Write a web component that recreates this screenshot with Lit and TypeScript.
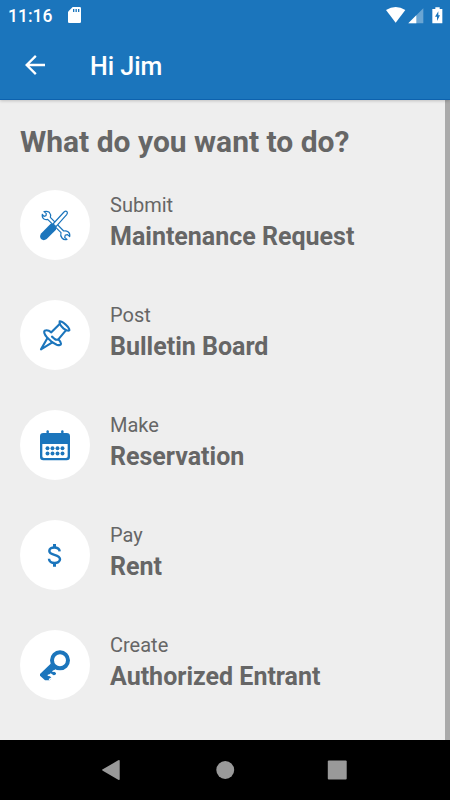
import { LitElement, html, svg, css, type TemplateResult } from "lit";
import { customElement, property } from "lit/decorators.js";

type IconName = "tools" | "pin" | "calendar" | "dollar" | "key";

const icons: Record<IconName, TemplateResult> = {
  tools: svg`
    <g fill="#fff" stroke="currentColor" stroke-width="3.6" stroke-linejoin="round">
      <path d="M102 95 L109 101 L108 107 L102 109 L97 103 Q95 112 102 117 Q108 120 113 118
        L153 158 Q150 167 156 174 Q162 181 171 178 L164 172 L166 165 L173 164 L179 170
        Q181 160 174 155 Q168 151 161 153 L121 112 Q124 104 118 97 Q111 92 102 95Z"/>
      <path d="M129 132 L162 96 Q167 92 171 95 Q174 99 170 104 L138 140Z"/>
    </g>
    <path fill="currentColor" d="M122 131 L127 132 L138 142 L138 149 L110 177 Q101 184 93 177 Q87 169 94 160Z"/>`,
  pin: svg`
    <g fill="none" stroke="currentColor" stroke-width="6.4" stroke-linejoin="round" stroke-linecap="round">
      <path d="M149 94 Q154 93 166 103 Q179 115 178 121 Q174 125 161 116 Q147 104 149 94Z"/>
      <path d="M149 102 L124 127 Q113 118 104 122 Q99 128 111 142 Q125 158 140 164 Q153 168 153 161 Q153 156 145 148 L167 122"/>
      <path d="M126 140 L134 147 Q140 151 145 148"/>
      <path d="M112 145 L93 178 L127 157"/>
    </g>`,
  calendar: svg`
    <g fill="currentColor">
      <rect x="109.500" y="91" width="7" height="14" rx="3"/>
      <rect x="153.500" y="91" width="7" height="14" rx="3"/>
      <path fill-rule="evenodd" d="M100 99 H170 Q180 99 180 109 V171 Q180 181 170 181 H100 Q90 181 90 171 V109 Q90 99 100 99Z
        M97 132 V169 Q97 174 102 174 H168 Q173 174 173 169 V132Z"/>
      ${[112.5, 127.5, 142.5, 157.5].map((x) =>
        [144.5, 160.5].map((y) => svg`<circle cx=${x} cy=${y} r="5.9"/>`))}
    </g>`,
  dollar: svg`
    <g fill="none" stroke="currentColor" stroke-width="7.5">
      <path d="M149 124 C147 108 118 109 118 123 C118 138 150 131 150 148 C150 163 117 163 117 146"/>
      <path stroke-width="9" d="M133.5 102 V113 M133.5 159 V170"/>
    </g>`,
  key: svg`
    <circle cx="150" cy="121" r="24" fill="none" stroke="currentColor" stroke-width="12"/>
    <path fill="currentColor" d="M122 131 L140 147 L131 151 L130 153 L138 159 Q139 165 131 166 L122 160
      L116 165 L125 173 Q124 180 114 181 L105 181 L90 167 V162Z"/>
    <path stroke="#fff" stroke-width="4.500" stroke-linecap="round" fill="none" d="M129 154 L137 151 M115 166 L126 167"/>
    <path stroke="#fff" stroke-width="4" d="M117 179 L128 172"/>`,
};

@customElement("menu-row")
class MenuRow extends LitElement {
  @property() icon: IconName = "tools";
  @property() action = "";
  @property() subject = "";

  static styles = css`
    :host { display: flex; align-items: center; gap: 20px; height: 70px; color: #666; }
    .disc {
      flex: none; width: 70px; height: 70px; border-radius: 50%;
      background: #fff; color: #1b75bc;
      display: flex; align-items: center; justify-content: center;
    }
    svg { display: block; width: 34px; height: 34px; }
    .action { font-size: 20px; line-height: 24px; }
    .subject { font-size: 25px; line-height: 30px; font-weight: 700; margin-top: 5px; white-space: nowrap; }
    .text { padding-bottom: 5px; }
  `;

  render() {
    return html`
      <div class="disc"><svg viewBox="84 84 102 102">${icons[this.icon]}</svg></div>
      <div class="text">
        <div class="action">${this.action}</div>
        <div class="subject">${this.subject}</div>
      </div>`;
  }
}

@customElement("app-root")
class AppRoot extends LitElement {
  static styles = css`
    :host {
      display: flex; flex-direction: column; height: 800px; width: 450px; overflow: hidden;
      font-family: Roboto, "Noto Sans", sans-serif; background: #eee; color: #666;
    }
    svg { display: block; }
    .top { background: #1b75bc; color: #fff; height: 99px; border-bottom: 1px solid #0d62ae; box-shadow: 0 1px 3px #0003; z-index: 1; }
    .status { display: flex; align-items: center; height: 30px; padding: 0 7.4px 0 8px; box-sizing: border-box; }
    .time { font-size: 17.5px; line-height: 30px; font-weight: 500; width: 60px; padding-top: 1px; }
    .spacer { flex: 1; }
    .bar { display: flex; align-items: center; height: 70px; padding-left: 25px; }
    .title { font-size: 25px; line-height: 30px; font-weight: 500; margin-left: 45px; padding-top: 4px; }
    .body { flex: 1; display: flex; min-height: 0; }
    .content { flex: 1; padding: 24px 20px 0; }
    .track { width: 5px; background: #aaa; }
    h1 { margin: 0 0 30px; font-size: 30px; line-height: 36px; font-weight: 700; white-space: nowrap; }
    .list { display: flex; flex-direction: column; gap: 40px; }
    .nav { height: 60px; background: #000; display: flex; align-items: center; justify-content: center; }
    .nav svg { width: 112.5px; height: 60px; fill: #999; }
  `;

  render() {
    return html`
      <div class="top">
        <div class="status">
          <div class="time">11:16</div>
          <svg width="13" height="16" viewBox="204 21 39 48">
            <path fill="#fff" d="M218 21 H239 Q243 21 243 25 V65 Q243 69 239 69 H208 Q204 69 204 65 V35Z"/>
            <path stroke="#1b75bc" stroke-width="4" d="M221 27 V36 M228.5 27 V36 M236 27 V36"/>
          </svg>
          <div class="spacer"></div>
          <svg width="57" height="17" viewBox="47 20 171 51">
            <path fill="#fff" d="M47 29 Q76 11 105 29 L76 67Z"/>
            <path fill="#fff" fill-opacity=".35" d="M159 24 V69 H114Z"/>
            <path fill="#fff" d="M138 45 V69 H114Z"/>
            <path fill="#fff" d="M186 26 H195 V21 H208 V26 H216 V69 H186Z"/>
            <path fill="#1b75bc" d="M204 33 L194 49 H200 V62 L209 45 H204Z"/>
          </svg>
        </div>
        <div class="bar">
          <svg width="20" height="20" viewBox="75 165 60 60" fill="none" stroke="#fff" stroke-width="7">
            <path d="M135 195 H80 M107.500 167.500 L80 195 L107.500 222.500"/>
          </svg>
          <div class="title">Hi Jim</div>
        </div>
      </div>
      <div class="body">
        <div class="content">
          <h1>What do you want to do?</h1>
          <div class="list">
            <menu-row icon="tools" action="Submit" subject="Maintenance Request"></menu-row>
            <menu-row icon="pin" action="Post" subject="Bulletin Board"></menu-row>
            <menu-row icon="calendar" action="Make" subject="Reservation"></menu-row>
            <menu-row icon="dollar" action="Pay" subject="Rent"></menu-row>
            <menu-row icon="key" action="Create" subject="Authorized Entrant"></menu-row>
          </div>
        </div>
        <div class="track"></div>
      </div>
      <div class="nav">
        <svg viewBox="0 0 113 60"><path d="M47 29.300 L62.500 20.300 Q64 19.500 64 21 V39 Q64 40.500 62.500 39.700 L47 30.700 Q45.500 30 47 29.300Z"/></svg>
        <svg viewBox="0 0 113 60"><circle cx="56.500" cy="30" r="9"/></svg>
        <svg viewBox="0 0 113 60"><rect x="47" y="20.500" width="19" height="19" rx="1"/></svg>
      </div>`;
  }
}
